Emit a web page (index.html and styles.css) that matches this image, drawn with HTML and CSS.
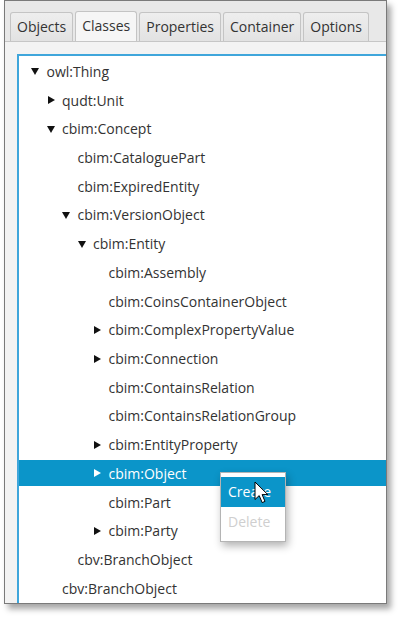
FILE: index.html
```html
<!DOCTYPE html>
<html>
<head>
<meta charset="utf-8">
<link rel="stylesheet" href="styles.css">
</head>
<body>
<div class="frame">
  <div class="tabs">
    <div class="tab">Objects</div>
    <div class="tab selected">Classes</div>
    <div class="tab">Properties</div>
    <div class="tab">Container</div>
    <div class="tab">Options</div>
  </div>
  <div class="panel">
    <div class="tree">
      <div class="row l0"><span class="arr down"></span><span class="lbl">owl:Thing</span></div>
      <div class="row l1"><span class="arr right"></span><span class="lbl">qudt:Unit</span></div>
      <div class="row l1"><span class="arr down"></span><span class="lbl">cbim:Concept</span></div>
      <div class="row l2"><span class="arr"></span><span class="lbl">cbim:CataloguePart</span></div>
      <div class="row l2"><span class="arr"></span><span class="lbl">cbim:ExpiredEntity</span></div>
      <div class="row l2"><span class="arr down"></span><span class="lbl">cbim:VersionObject</span></div>
      <div class="row l3"><span class="arr down"></span><span class="lbl">cbim:Entity</span></div>
      <div class="row l4"><span class="arr"></span><span class="lbl">cbim:Assembly</span></div>
      <div class="row l4"><span class="arr"></span><span class="lbl">cbim:CoinsContainerObject</span></div>
      <div class="row l4"><span class="arr right"></span><span class="lbl">cbim:ComplexPropertyValue</span></div>
      <div class="row l4"><span class="arr right"></span><span class="lbl">cbim:Connection</span></div>
      <div class="row l4"><span class="arr"></span><span class="lbl">cbim:ContainsRelation</span></div>
      <div class="row l4"><span class="arr"></span><span class="lbl">cbim:ContainsRelationGroup</span></div>
      <div class="row l4"><span class="arr right"></span><span class="lbl">cbim:EntityProperty</span></div>
      <div class="row l4 sel"><span class="arr right"></span><span class="lbl">cbim:Object</span></div>
      <div class="row l4"><span class="arr"></span><span class="lbl">cbim:Part</span></div>
      <div class="row l4"><span class="arr right"></span><span class="lbl">cbim:Party</span></div>
      <div class="row l2"><span class="arr"></span><span class="lbl">cbv:BranchObject</span></div>
      <div class="row l1"><span class="arr"></span><span class="lbl">cbv:BranchObject</span></div>
    </div>
    <div class="menu">
      <div class="item active">Create</div>
      <div class="item disabled">Delete</div>
    </div>
    <svg class="cursor" width="16" height="24" viewBox="0 0 16 24">
      <path d="M1 1 L1 18.5 L5.2 14.6 L8.2 21.6 L11 20.4 L8.1 13.6 L13.8 13.6 Z" fill="#fff" stroke="#000" stroke-width="1" stroke-linejoin="round"/>
    </svg>
  </div>
</div>
</body>
</html>
```

FILE: styles.css
```css
html, body {
  margin: 0;
  padding: 0;
  background: #fff;
}
body {
  width: 400px;
  height: 618px;
  overflow: hidden;
  font-family: "Open Sans", "Noto Sans", sans-serif;
}
.frame {
  margin-left: 4px;
  width: 381px;
  height: 602px;
  border: 1px solid #7a7a7a;
  background: #f2f2f2;
  box-shadow: 4px 5px 6px rgba(0, 0, 0, 0.35);
  overflow: hidden;
  display: flex;
  flex-direction: column;
}
.tabs {
  height: 40px;
  background: #e8e8e8;
  display: flex;
  align-items: flex-end;
  padding-left: 5px;
  gap: 2px;
  flex: none;
}
.tab {
  height: 28px;
  line-height: 28px;
  padding: 0 6px;
  font-size: 14px;
  color: #333;
  background: linear-gradient(#eeeeee, #e2e2e2);
  border: 1px solid #c4c4c4;
  border-bottom: none;
  border-radius: 3px 3px 0 0;
  box-sizing: content-box;
}
.tab.selected {
  background: #f6f6f6;
  height: 29px;
}
.panel {
  flex: 1;
  position: relative;
  border-top: 1px solid #c6c6c6;
  background: #f3f3f3;
  padding: 12px 0 0 12px;
}
.tree {
  background: #fff;
  border-top: 2px solid #3fa6db;
  border-left: 2px solid #3fa6db;
  height: 600px;
  padding-top: 1px;
}
.row {
  height: 28.72px;
  display: flex;
  align-items: center;
  font-size: 14px;
  color: #333;
  white-space: nowrap;
}
.l0 { padding-left: 12px; }
.l1 { padding-left: 27.5px; }
.l2 { padding-left: 43px; }
.l3 { padding-left: 58.5px; }
.l4 { padding-left: 74px; }
.arr {
  width: 15.5px;
  height: 10px;
  flex: none;
  position: relative;
}
.arr.right::before {
  content: "";
  position: absolute;
  left: 1px;
  top: 1px;
  border-left: 7px solid #111;
  border-top: 4px solid transparent;
  border-bottom: 4px solid transparent;
}
.arr.down::before {
  content: "";
  position: absolute;
  left: 0;
  top: 2px;
  border-top: 7px solid #111;
  border-left: 4px solid transparent;
  border-right: 4px solid transparent;
}
.row.sel {
  background: #0b95c9;
  color: #fff;
  height: 26px;
  margin: 1.36px 0;
}
.row.sel .arr.right::before {
  border-left-color: #fff;
}
.menu {
  position: absolute;
  left: 215px;
  top: 430px;
  width: 64px;
  padding: 4px 0;
  background: #fff;
  border: 1px solid #b4b4b4;
  box-shadow: 2px 4px 8px rgba(0, 0, 0, 0.3);
}
.item {
  height: 30px;
  line-height: 30px;
  padding-left: 7px;
  font-size: 14px;
  color: #333;
}
.item.active {
  background: #0b95c9;
  color: #fff;
}
.item.disabled {
  color: #cfcfcf;
}
.cursor {
  position: absolute;
  left: 249px;
  top: 439px;
}
```
